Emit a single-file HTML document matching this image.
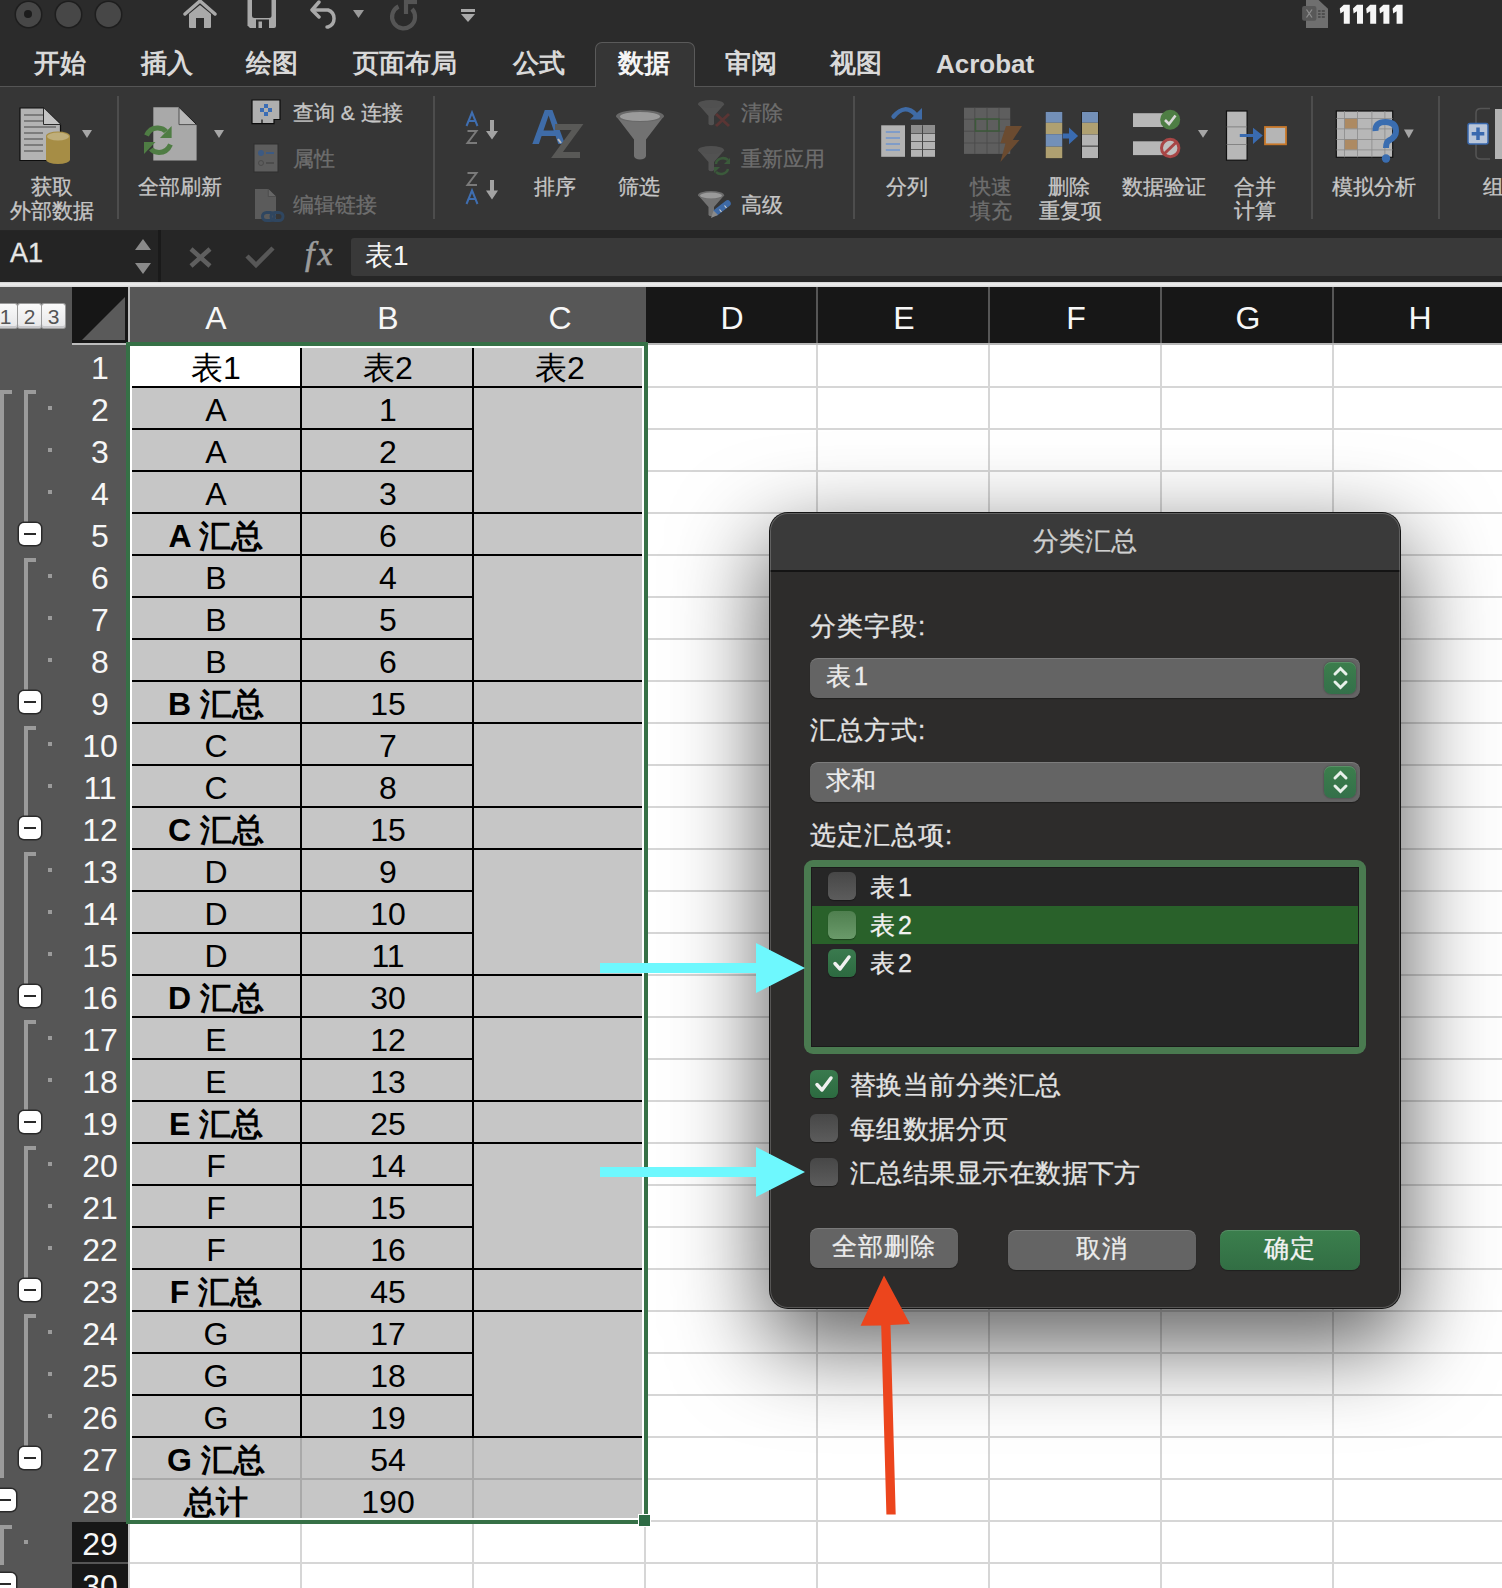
<!DOCTYPE html><html><head><meta charset="utf-8"><style>
html,body{margin:0;padding:0;background:#2b2b2b}
#root{position:relative;width:1502px;height:1588px;overflow:hidden;font-family:"Liberation Sans",sans-serif}
.t{position:absolute;white-space:nowrap}
.r{position:absolute}
</style></head><body><div id="root">
<div class="r" style="left:0px;top:0px;width:1502px;height:86px;background:#2b2b2b"></div>
<div class="r" style="left:15.5px;top:1.5px;width:25px;height:25px;border-radius:50%;background:#474747;box-shadow:0 0 0 1.5px #1e1e1e"></div>
<div class="r" style="left:55.5px;top:1.5px;width:25px;height:25px;border-radius:50%;background:#474747;box-shadow:0 0 0 1.5px #1e1e1e"></div>
<div class="r" style="left:95.5px;top:1.5px;width:25px;height:25px;border-radius:50%;background:#474747;box-shadow:0 0 0 1.5px #1e1e1e"></div>
<div class="r" style="left:24px;top:9.5px;width:8px;height:8px;border-radius:50%;background:#1c1c1c"></div>
<svg class="r" style="left:183px;top:0px" width="34" height="30" viewBox="0 0 34 30"><path d="M2 14 L17 1 L32 14" stroke="#a9a9a9" stroke-width="3.5" fill="none" stroke-linecap="round"/><path d="M6 14 L17 5 L28 14 V27 a1 1 0 0 1 -1 1 H21 V18 H13 V28 H7 a1 1 0 0 1 -1 -1Z" fill="#a9a9a9"/></svg>
<svg class="r" style="left:247px;top:0px" width="30" height="30" viewBox="0 0 30 30"><path d="M0.5 0 H29 V26 a2 2 0 0 1 -2 2 H3 L0.5 25.5 Z" fill="#a9a9a9"/><path d="M5 0 H24.5 V15.5 a2.5 2.5 0 0 1 -2.5 2.5 H7.5 a2.5 2.5 0 0 1 -2.5 -2.5 Z" fill="#2b2b2b"/><rect x="9" y="19.5" width="13" height="8.5" fill="#2b2b2b"/><rect x="11.5" y="21.5" width="3.5" height="6.5" fill="#a9a9a9"/></svg>
<svg class="r" style="left:309px;top:0px" width="34" height="30" viewBox="0 0 34 30"><path d="M10 2 L3 10 L10 17" stroke="#a9a9a9" stroke-width="3.5" fill="none" stroke-linecap="round" stroke-linejoin="round"/><path d="M4 10 H19 a9 9 0 0 1 0 17 H18" stroke="#a9a9a9" stroke-width="3.5" fill="none" stroke-linecap="round"/></svg>
<svg class="r" style="left:353px;top:10px" width="12" height="9" viewBox="0 0 12 9"><path d="M0 0 H11 L5.5 8Z" fill="#9a9a9a"/></svg>
<svg class="r" style="left:386px;top:0px" width="36" height="32" viewBox="0 0 36 32"><path d="M12.5 6.5 A11.5 11.5 0 1 0 26 9" stroke="#555" stroke-width="4.2" fill="none"/><path d="M20 0 V14" stroke="#555" stroke-width="4.2"/><path d="M18 2 H31" stroke="#555" stroke-width="4.2"/></svg>
<svg class="r" style="left:460px;top:8px" width="16" height="16" viewBox="0 0 16 16"><rect x="1" y="1" width="14" height="3" fill="#a9a9a9"/><path d="M1 6 H15 L8 14Z" fill="#a9a9a9"/></svg>
<svg class="r" style="left:1290px;top:0px" width="130" height="40" viewBox="0 0 130 40"><path d="M16 0 H28.6 L38 8.7 V27.9 H16 Z" fill="#6f6f6f"/><rect x="12.1" y="6" width="14.3" height="14.8" rx="2" fill="#585858"/><path d="M16.5 9.5 L22 17.5 M22 9.5 L16.5 17.5" stroke="#8c8c8c" stroke-width="1.3"/><g fill="#4e4e4e"><rect x="28.1" y="10" width="2.5" height="2"/><rect x="31.8" y="10" width="3" height="2"/><rect x="28.1" y="13" width="2.5" height="2"/><rect x="31.8" y="13" width="3" height="2"/><rect x="28.1" y="16" width="2.5" height="2"/><rect x="31.8" y="16" width="3" height="2"/></g><path transform="translate(49.78,0)" d="M4 4.8 H10 V23.8 H4 V11.3 L0.6 13.6 L0 8.6 Z" fill="#f6f6f6"/><path transform="translate(62.99,0)" d="M4 4.8 H10 V23.8 H4 V11.3 L0.6 13.6 L0 8.6 Z" fill="#f6f6f6"/><path transform="translate(76.19,0)" d="M4 4.8 H10 V23.8 H4 V11.3 L0.6 13.6 L0 8.6 Z" fill="#f6f6f6"/><path transform="translate(89.39,0)" d="M4 4.8 H10 V23.8 H4 V11.3 L0.6 13.6 L0 8.6 Z" fill="#f6f6f6"/><path transform="translate(102.60,0)" d="M4 4.8 H10 V23.8 H4 V11.3 L0.6 13.6 L0 8.6 Z" fill="#f6f6f6"/></svg>
<div class="r" style="left:595px;top:42px;width:100px;height:45px;background:#363636;border:1px solid #5a5a5a;border-bottom:none;border-radius:7px 7px 0 0;box-sizing:border-box"></div>
<div class="r" style="left:0px;top:86px;width:595px;height:1px;background:#555"></div>
<div class="r" style="left:695px;top:86px;width:807px;height:1px;background:#555"></div>
<div class="t" style="left:34px;top:51.4px;font-size:25.5px;line-height:25.5px;color:#d9d9d9;font-weight:bold;">开始</div>
<div class="t" style="left:141px;top:51.4px;font-size:25.5px;line-height:25.5px;color:#d9d9d9;font-weight:bold;">插入</div>
<div class="t" style="left:246px;top:51.4px;font-size:25.5px;line-height:25.5px;color:#d9d9d9;font-weight:bold;">绘图</div>
<div class="t" style="left:353px;top:51.4px;font-size:25.5px;line-height:25.5px;color:#d9d9d9;font-weight:bold;">页面布局</div>
<div class="t" style="left:513px;top:51.4px;font-size:25.5px;line-height:25.5px;color:#d9d9d9;font-weight:bold;">公式</div>
<div class="t" style="left:725px;top:51.4px;font-size:25.5px;line-height:25.5px;color:#d9d9d9;font-weight:bold;">审阅</div>
<div class="t" style="left:830px;top:51.4px;font-size:25.5px;line-height:25.5px;color:#d9d9d9;font-weight:bold;">视图</div>
<div class="t" style="left:618px;top:51.4px;font-size:25.5px;line-height:25.5px;color:#f4f4f4;font-weight:bold;">数据</div>
<div class="t" style="left:936px;top:51.0px;font-size:26px;line-height:26px;color:#d9d9d9;font-weight:bold;">Acrobat</div>
<div class="r" style="left:0px;top:87px;width:1502px;height:143px;background:#363636"></div>
<div class="r" style="left:117px;top:96px;width:2px;height:123px;background:#4d4d4d"></div>
<div class="r" style="left:433px;top:96px;width:2px;height:123px;background:#4d4d4d"></div>
<div class="r" style="left:853px;top:96px;width:2px;height:123px;background:#4d4d4d"></div>
<div class="r" style="left:1311px;top:96px;width:2px;height:123px;background:#4d4d4d"></div>
<div class="r" style="left:1438px;top:96px;width:2px;height:123px;background:#4d4d4d"></div>
<div class="t" style="left:-8.0px;width:120px;text-align:center;top:176.2px;font-size:21px;line-height:21px;color:#c6c6c6;font-weight:normal;-webkit-text-stroke:0.3px #c6c6c6;">获取</div>
<div class="t" style="left:-8.0px;width:120px;text-align:center;top:200.2px;font-size:21px;line-height:21px;color:#c6c6c6;font-weight:normal;-webkit-text-stroke:0.3px #c6c6c6;">外部数据</div>
<div class="t" style="left:120.0px;width:120px;text-align:center;top:176.2px;font-size:21px;line-height:21px;color:#c6c6c6;font-weight:normal;-webkit-text-stroke:0.3px #c6c6c6;">全部刷新</div>
<div class="t" style="left:293px;top:102.2px;font-size:21px;line-height:21px;color:#c6c6c6;font-weight:normal;-webkit-text-stroke:0.3px #c6c6c6;">查询 &amp; 连接</div>
<div class="t" style="left:293px;top:148.2px;font-size:21px;line-height:21px;color:#6e6e6e;font-weight:normal;-webkit-text-stroke:0.3px #6e6e6e;">属性</div>
<div class="t" style="left:293px;top:194.2px;font-size:21px;line-height:21px;color:#6e6e6e;font-weight:normal;-webkit-text-stroke:0.3px #6e6e6e;">编辑链接</div>
<div class="t" style="left:495.0px;width:120px;text-align:center;top:176.2px;font-size:21px;line-height:21px;color:#c6c6c6;font-weight:normal;-webkit-text-stroke:0.3px #c6c6c6;">排序</div>
<div class="t" style="left:579.0px;width:120px;text-align:center;top:176.2px;font-size:21px;line-height:21px;color:#c6c6c6;font-weight:normal;-webkit-text-stroke:0.3px #c6c6c6;">筛选</div>
<div class="t" style="left:741px;top:102.2px;font-size:21px;line-height:21px;color:#6e6e6e;font-weight:normal;-webkit-text-stroke:0.3px #6e6e6e;">清除</div>
<div class="t" style="left:741px;top:148.2px;font-size:21px;line-height:21px;color:#6e6e6e;font-weight:normal;-webkit-text-stroke:0.3px #6e6e6e;">重新应用</div>
<div class="t" style="left:741px;top:194.2px;font-size:21px;line-height:21px;color:#c6c6c6;font-weight:normal;-webkit-text-stroke:0.3px #c6c6c6;">高级</div>
<div class="t" style="left:847.0px;width:120px;text-align:center;top:176.2px;font-size:21px;line-height:21px;color:#c6c6c6;font-weight:normal;-webkit-text-stroke:0.3px #c6c6c6;">分列</div>
<div class="t" style="left:931.0px;width:120px;text-align:center;top:176.2px;font-size:21px;line-height:21px;color:#6e6e6e;font-weight:normal;-webkit-text-stroke:0.3px #6e6e6e;">快速</div>
<div class="t" style="left:931.0px;width:120px;text-align:center;top:200.2px;font-size:21px;line-height:21px;color:#6e6e6e;font-weight:normal;-webkit-text-stroke:0.3px #6e6e6e;">填充</div>
<div class="t" style="left:1009.0px;width:120px;text-align:center;top:176.2px;font-size:21px;line-height:21px;color:#c6c6c6;font-weight:normal;-webkit-text-stroke:0.3px #c6c6c6;">删除</div>
<div class="t" style="left:1010.0px;width:120px;text-align:center;top:200.2px;font-size:21px;line-height:21px;color:#c6c6c6;font-weight:normal;-webkit-text-stroke:0.3px #c6c6c6;">重复项</div>
<div class="t" style="left:1104.0px;width:120px;text-align:center;top:176.2px;font-size:21px;line-height:21px;color:#c6c6c6;font-weight:normal;-webkit-text-stroke:0.3px #c6c6c6;">数据验证</div>
<div class="t" style="left:1195.0px;width:120px;text-align:center;top:176.2px;font-size:21px;line-height:21px;color:#c6c6c6;font-weight:normal;-webkit-text-stroke:0.3px #c6c6c6;">合并</div>
<div class="t" style="left:1195.0px;width:120px;text-align:center;top:200.2px;font-size:21px;line-height:21px;color:#c6c6c6;font-weight:normal;-webkit-text-stroke:0.3px #c6c6c6;">计算</div>
<div class="t" style="left:1314.0px;width:120px;text-align:center;top:176.2px;font-size:21px;line-height:21px;color:#c6c6c6;font-weight:normal;-webkit-text-stroke:0.3px #c6c6c6;">模拟分析</div>
<div class="t" style="left:1483px;top:176.2px;font-size:21px;line-height:21px;color:#c6c6c6;font-weight:normal;-webkit-text-stroke:0.3px #c6c6c6;">组</div>
<svg class="r" style="left:10px;top:100px" width="100" height="70" viewBox="0 0 100 70">
<path d="M10 8 H33.5 L50.5 24.5 V60.5 H10 Z" fill="#b3b3b3" stroke="#0e0e0e" stroke-width="1.2"/>
<path d="M33.5 8 V24.5 H50.5" fill="#c4c4c4" stroke="#2a2a2a" stroke-width="1"/>
<g fill="#7c7c7c"><rect x="14" y="14" width="19" height="2"/><rect x="14" y="20" width="19" height="2"/><rect x="14" y="26" width="32" height="2"/><rect x="14" y="32" width="19" height="2"/><rect x="14" y="38" width="19" height="2"/><rect x="14" y="44" width="19" height="2"/><rect x="14" y="50" width="19" height="2"/></g>
<path d="M36 36 A12 4.5 0 0 1 60 36 V59.5 A12 4.5 0 0 1 36 59.5 Z" fill="#a68d45"/>
<ellipse cx="48" cy="36.5" rx="11" ry="4" fill="#bfae7a"/>
<path d="M72 30 H82 L77 38 Z" fill="#a6a6a6"/>
</svg>
<svg class="r" style="left:135px;top:100px" width="100" height="70" viewBox="0 0 100 70">
<path d="M18.3 7.3 H44 L61.6 24.6 V60.6 H18.3 Z" fill="#a9a9a9"/>
<path d="M44 7.3 V24.6 H61.6" fill="#b8b8b8" stroke="#3a3a3a" stroke-width="0.8"/>
<path d="M44 7.3 L61.6 24.6" stroke="#1a1a1a" stroke-width="1"/>
<path d="M11.5 35.5 Q15 27.5 23 28 Q28.5 28.3 31 31.5" stroke="#4f7d44" stroke-width="5" fill="none"/>
<path d="M36.6 26 V38 H25 Z" fill="#4f7d44"/>
<path d="M35.5 44.5 Q32 52.5 24 52.5 Q18.5 52.3 16 49" stroke="#4f7d44" stroke-width="5" fill="none"/>
<path d="M9 42 H20.5 L9 54 Z" fill="#4f7d44"/>
<path d="M79 30 H89 L84 38 Z" fill="#a6a6a6"/>
</svg>
<svg class="r" style="left:245px;top:95px" width="50" height="130" viewBox="0 0 50 130">
<path d="M7 5 H35 V24.5 H29 V28.6 H17 V24.5 H17 V28.6 H7 Z" fill="#afafaf" stroke="#0c0c0c" stroke-width="1.2"/>
<g fill="#3b6db5"><rect x="19" y="9" width="4" height="4"/><rect x="15" y="13" width="4" height="4"/><rect x="23" y="13" width="4" height="4"/><rect x="19" y="17" width="4" height="4"/></g>
<rect x="9" y="49" width="24" height="28" fill="#5d5d5d" stroke="#2e2e2e" stroke-width="1"/>
<circle cx="16" cy="58" r="3" fill="#3d5a82"/><rect x="21" y="57" width="8" height="2" fill="#3d5a82"/>
<circle cx="16" cy="68" r="2.5" fill="none" stroke="#4a4a4a" stroke-width="1"/><rect x="21" y="67" width="8" height="2" fill="#4c4c4c"/>
<path d="M10 94 H23.3 L31 101.5 V124 H10 Z" fill="#5b5b5b"/>
<path d="M23.3 94 V101.5 H31" fill="#666" stroke="#4a4a4a" stroke-width="0.8"/>
<g stroke="#2f4660" stroke-width="3" fill="none"><rect x="17.5" y="117.5" width="12" height="8" rx="4"/><rect x="26" y="117.5" width="12" height="8" rx="4"/></g>
</svg>
<svg class="r" style="left:455px;top:100px" width="135" height="110" viewBox="0 0 135 110">
<path d="M11.5 26 L17 12.5 L22.5 26 M13.6 21 H20.4" stroke="#3f6eb0" stroke-width="2" fill="none"/>
<path d="M12.5 31 H21.5 L12.5 43 H22" stroke="#7a7a7a" stroke-width="2" fill="none"/>
<path d="M35 20 H39 V31 H43 L37 39.5 L31 31 H35 Z" fill="#a3a3a3"/>
<path d="M12.5 73 H21.5 L12.5 85 H22" stroke="#7a7a7a" stroke-width="2" fill="none"/>
<path d="M11.5 104 L17 90.5 L22.5 104 M13.6 99 H20.4" stroke="#3f6eb0" stroke-width="2" fill="none"/>
<path d="M35 80 H39 V90.5 H43 L37 99.5 L31 90.5 H35 Z" fill="#a3a3a3"/>
<path d="M77.3 44 L89.8 10 H97.4 L109.9 44 H103.3 L100.6 36 H86.6 L83.9 44 Z M88.5 30.5 H98.7 L93.6 15.5 Z" fill="#3f6ca8" fill-rule="evenodd"/>
<path d="M100 27 H122.5 L102 55 H125" stroke="#595957" stroke-width="6" fill="none"/>
<path d="M103 39 L106 43" stroke="#b8b8b8" stroke-width="2"/>
</svg>
<svg class="r" style="left:605px;top:92px" width="135" height="135" viewBox="0 0 135 135">
<path d="M11 24 L29 47.6 V64 A6 3.5 0 0 0 41 64 V47.6 L59 24 Z" fill="#727272"/>
<ellipse cx="35" cy="24" rx="24" ry="6" fill="#686868"/>
<ellipse cx="35" cy="24.5" rx="20" ry="4.5" fill="#9b9b9b"/>
<g opacity="0.55">
<path d="M93 12 L103.5 24 V32 A3 2 0 0 0 109 32 V24 L119.5 12 Z" fill="#6a6a6a"/>
<ellipse cx="106" cy="12" rx="13" ry="4" fill="#666"/>
<path d="M93 58 L103.5 70 V78 A3 2 0 0 0 109 78 V70 L119.5 58 Z" fill="#6a6a6a"/>
<ellipse cx="106" cy="58" rx="13" ry="4" fill="#666"/>
</g>
<path d="M111 22 L124 34 M124 22 L111 34" stroke="#5a3534" stroke-width="3"/>
<path d="M111 72 A7 6 0 0 1 123 68" stroke="#3b5a3b" stroke-width="2.5" fill="none"/><path d="M125 66 V72 H119Z" fill="#3b5a3b"/>
<path d="M123 77 A7 6 0 0 1 111 80" stroke="#3b5a3b" stroke-width="2.5" fill="none"/><path d="M109 75 H115 L109 81Z" fill="#3b5a3b"/>
<path d="M93 103 L103.5 115 V123 A3 2 0 0 0 109 123 V115 L119.5 103 Z" fill="#727272"/>
<ellipse cx="106" cy="103" rx="13" ry="4" fill="#6c6c6c"/>
<ellipse cx="106" cy="103.5" rx="11" ry="3" fill="#9a9a9a"/>
<path d="M111.5 120 L122.5 111.5" stroke="#3e6aa6" stroke-width="6.5" stroke-linecap="round"/>
<path d="M114.5 117.5 L116.5 120 M119.5 113.5 L121.5 116" stroke="#d0d0d0" stroke-width="1.2"/>
<path d="M106 126 L108.5 118.5 L113 123 Z" fill="#8a8a8a"/>
</svg>
<svg class="r" style="left:875px;top:100px" width="155" height="70" viewBox="0 0 155 70">
<rect x="6.2" y="25.3" width="23.8" height="31.5" fill="#b3b3b3"/>
<g fill="#7f9cc8"><rect x="10.8" y="31" width="14.2" height="2"/><rect x="10.8" y="37" width="14.2" height="2"/><rect x="10.8" y="43" width="14.2" height="2"/><rect x="10.8" y="49" width="14.2" height="2"/></g>
<rect x="36" y="25.3" width="24" height="31.5" fill="#b3b3b3"/>
<rect x="36" y="25.3" width="24" height="7.7" fill="#8d8d8d"/>
<g fill="#454545"><rect x="47" y="25.3" width="1" height="31.5"/><rect x="36" y="33" width="24" height="0.8"/><rect x="36" y="41" width="24" height="0.8"/><rect x="36" y="49" width="24" height="0.8"/></g>
<path d="M18.6 16.5 Q30 3 41 15" stroke="#3f6ba6" stroke-width="4.5" fill="none" stroke-linecap="round"/>
<path d="M47 8 V19.6 H35 Z" fill="#3f6ba6"/>
<rect x="89" y="7.7" width="46.2" height="46.2" fill="#5e5e5e"/>
<g fill="#4c4c4c"><rect x="99.3" y="7.7" width="1" height="46.2"/><rect x="111.5" y="7.7" width="1" height="46.2"/><rect x="123.5" y="7.7" width="1" height="46.2"/><rect x="89" y="18.7" width="46.2" height="1"/><rect x="89" y="30.7" width="46.2" height="1"/><rect x="89" y="42.5" width="46.2" height="1"/></g>
<rect x="100.5" y="19" width="23.5" height="12" fill="none" stroke="#3c5a3a" stroke-width="1.5"/><rect x="111.7" y="19" width="1" height="12" fill="#3c5a3a"/>
<path d="M131 26 H147 L137.8 40 H144.5 L125.4 62 L130.5 43.3 H125.4 Z" fill="#6b4b30"/>
</svg>
<svg class="r" style="left:1035px;top:100px" width="180" height="70" viewBox="0 0 180 70">
<rect x="10.2" y="11.4" width="17.6" height="47.3" fill="#2a2a2a"/>
<rect x="10.7" y="11.9" width="16.6" height="10.9" fill="#7390b8"/><rect x="10.7" y="22.8" width="16.6" height="11.4" fill="#afa071"/>
<rect x="10.7" y="34.2" width="16.6" height="12.5" fill="#7390b8"/><rect x="10.7" y="46.7" width="16.6" height="11.5" fill="#afa071"/>
<path d="M27.8 33.6 H34 V27.6 L43.1 36 L34 44.3 V38.4 H27.8 Z" fill="#3a6bb0"/>
<rect x="46.5" y="11.4" width="17" height="47.3" fill="#111"/>
<rect x="47" y="11.9" width="16" height="10.9" fill="#7390b8"/><rect x="47" y="22.8" width="16" height="11.7" fill="#afa071"/>
<rect x="47" y="34.5" width="16" height="11.2" fill="#b3b3b3"/><rect x="47" y="46.5" width="16" height="11.7" fill="#b3b3b3"/>
<rect x="98" y="13.2" width="30" height="13.8" fill="#b7b7b7"/>
<rect x="98" y="41.3" width="30" height="13.8" fill="#b7b7b7"/>
<circle cx="135.2" cy="19.8" r="10" fill="#4e7e44"/>
<path d="M130 20 L134 24 L140.5 15.5" stroke="#d8d8d8" stroke-width="2.6" fill="none"/>
<circle cx="135.2" cy="48" r="8.7" fill="#c0c0c0" stroke="#a84646" stroke-width="3"/>
<path d="M129.5 53.5 L141 42.5" stroke="#a84646" stroke-width="3"/>
<path d="M163 30 H173.2 L168 37.8 Z" fill="#a6a6a6"/>
</svg>
<svg class="r" style="left:1215px;top:100px" width="287" height="70" viewBox="0 0 287 70">
<rect x="11.5" y="11" width="20.6" height="49.2" fill="#b7b7b7" stroke="#111" stroke-width="1.2"/>
<rect x="11.5" y="26.5" width="20.6" height="0.8" fill="#777"/><rect x="11.5" y="44" width="20.6" height="0.8" fill="#777"/>
<path d="M24.8 34 H38 V27.7 L47.8 35.5 L38 44 V37 H24.8 Z" fill="#3a6bb0"/>
<rect x="50" y="27" width="21" height="17.3" fill="#b5b5b5" stroke="#c8782a" stroke-width="1.8"/>
<rect x="121.3" y="11" width="56.4" height="46.3" fill="#b7b7b7" stroke="#111" stroke-width="1.2"/>
<rect x="129.6" y="18.2" width="12.8" height="10.5" fill="#ad8a62"/><rect x="129.6" y="39.2" width="12.8" height="10.5" fill="#ad8a62"/>
<g fill="#8a8a8a"><rect x="129.2" y="11" width="0.8" height="46.3"/><rect x="142.2" y="11" width="0.8" height="46.3"/><rect x="156.5" y="11" width="0.8" height="46.3"/><rect x="169.5" y="11" width="0.8" height="46.3"/>
<rect x="121.3" y="18" width="56.4" height="0.8"/><rect x="121.3" y="28.5" width="56.4" height="0.8"/><rect x="121.3" y="39" width="56.4" height="0.8"/><rect x="121.3" y="49.5" width="56.4" height="0.8"/></g>
<path d="M160.5 31 Q160 22 170.5 22 Q181 22 181 31 Q181 37 174 40.5 Q171 42 171 48" stroke="#3a6db0" stroke-width="6" fill="none"/>
<circle cx="171" cy="58.5" r="4.2" fill="#3a6db0"/>
<path d="M189 29.6 H198.7 L193.8 38.2 Z" fill="#a6a6a6"/>
<path d="M275 8.5 H266 Q261 8.5 261 13 V55 Q261 59 266 59 H275" stroke="#555" stroke-width="1.5" fill="none"/>
<rect x="253" y="23.5" width="20" height="20.5" rx="2" fill="#b9c6da" stroke="#3a69ae" stroke-width="1.5"/>
<path d="M263 27.5 V40 M256.7 33.7 H269.3" stroke="#3a69ae" stroke-width="3.5"/>
<rect x="280" y="9" width="10" height="50" fill="#b3b3b3"/>
</svg>
<div class="r" style="left:0px;top:230px;width:1502px;height:52px;background:#262626"></div>
<div class="r" style="left:0px;top:231px;width:158px;height:49px;background:#242424"></div>
<div class="r" style="left:158px;top:230px;width:3px;height:52px;background:#1a1a1a"></div>
<div class="t" style="left:10px;top:240.1px;font-size:27px;line-height:27px;color:#e6e6e6;font-weight:normal;-webkit-text-stroke:0.3px #e6e6e6;">A1</div>
<svg class="r" style="left:134px;top:238px" width="18" height="38" viewBox="0 0 18 38"><path d="M1 12 L9 1 L17 12Z M1 25 L17 25 L9 36Z" fill="#8a8a8a"/></svg>
<svg class="r" style="left:188px;top:246px" width="25" height="23" viewBox="0 0 25 23"><path d="M3 3 L22 20 M22 3 L3 20" stroke="#5f5f5f" stroke-width="4.5"/></svg>
<svg class="r" style="left:244px;top:244px" width="32" height="25" viewBox="0 0 32 25"><path d="M3 12 L12 21 L29 4" stroke="#575757" stroke-width="4.5" fill="none"/></svg>
<div class="t" style="left:305px;top:237.2px;font-size:34px;line-height:34px;color:#9c9c9c;font-weight:normal;font-family:Liberation Serif,serif;-webkit-text-stroke:0.6px #9c9c9c;"><i>f</i><i style="margin-left:3px">x</i></div>
<div class="r" style="left:351px;top:238px;width:1151px;height:38px;background:#393939;border-radius:3px 0 0 3px"></div>
<div class="t" style="left:365px;top:242.3px;font-size:28px;line-height:28px;color:#f5f5f5;font-weight:normal;">表1</div>
<div class="r" style="left:0px;top:282px;width:1502px;height:5px;background:linear-gradient(#cfcfcf,#f0f0f0 40%,#d8d8d8)"></div>
<div class="r" style="left:0px;top:287px;width:1502px;height:1301px;background:#ffffff"></div>
<div class="r" style="left:0px;top:287px;width:72px;height:1301px;background:#565656"></div>
<div class="r" style="left:72px;top:345px;width:56px;height:1177px;background:#565656"></div>
<div class="r" style="left:-6px;top:304px;width:23px;height:24px;background:linear-gradient(#fafafa,#e6e6e8);border-radius:2px;box-shadow:inset 0 -2px 0 #c9c9cc, 0 0 0 1px #9a9a9a"></div>
<div class="t" style="left:-6.0px;width:23px;text-align:center;top:306.2px;font-size:21px;line-height:21px;color:#555;font-weight:normal;">1</div>
<div class="r" style="left:18px;top:304px;width:23px;height:24px;background:linear-gradient(#fafafa,#e6e6e8);border-radius:2px;box-shadow:inset 0 -2px 0 #c9c9cc, 0 0 0 1px #9a9a9a"></div>
<div class="t" style="left:18.0px;width:23px;text-align:center;top:306.2px;font-size:21px;line-height:21px;color:#555;font-weight:normal;">2</div>
<div class="r" style="left:42px;top:304px;width:23px;height:24px;background:linear-gradient(#fafafa,#e6e6e8);border-radius:2px;box-shadow:inset 0 -2px 0 #c9c9cc, 0 0 0 1px #9a9a9a"></div>
<div class="t" style="left:42.0px;width:23px;text-align:center;top:306.2px;font-size:21px;line-height:21px;color:#555;font-weight:normal;">3</div>
<div class="r" style="left:72px;top:287px;width:56px;height:56px;background:#161616"></div>
<svg class="r" style="left:72px;top:287px" width="58" height="58" viewBox="0 0 58 58"><path d="M10 53 L53 10 L53 53 Z" fill="#5a5a5a"/><rect x="56" y="0" width="2" height="58" fill="#bdbdbd"/><rect x="0" y="56" width="58" height="2" fill="#bdbdbd"/></svg>
<div class="r" style="left:130px;top:287px;width:516px;height:56px;background:#575757"></div>
<div class="r" style="left:646px;top:287px;width:856px;height:56px;background:#171717"></div>
<div class="r" style="left:646px;top:343px;width:856px;height:2px;background:#b8b8b8"></div>
<div class="r" style="left:816px;top:287px;width:2px;height:56px;background:#565656"></div>
<div class="r" style="left:988px;top:287px;width:2px;height:56px;background:#565656"></div>
<div class="r" style="left:1160px;top:287px;width:2px;height:56px;background:#565656"></div>
<div class="r" style="left:1332px;top:287px;width:2px;height:56px;background:#565656"></div>
<div class="t" style="left:136.0px;width:160px;text-align:center;top:301.9px;font-size:32px;line-height:32px;color:#f7f7f7;font-weight:normal;">A</div>
<div class="t" style="left:308.0px;width:160px;text-align:center;top:301.9px;font-size:32px;line-height:32px;color:#f7f7f7;font-weight:normal;">B</div>
<div class="t" style="left:480.0px;width:160px;text-align:center;top:301.9px;font-size:32px;line-height:32px;color:#f7f7f7;font-weight:normal;">C</div>
<div class="t" style="left:652.0px;width:160px;text-align:center;top:301.9px;font-size:32px;line-height:32px;color:#f7f7f7;font-weight:normal;">D</div>
<div class="t" style="left:824.0px;width:160px;text-align:center;top:301.9px;font-size:32px;line-height:32px;color:#f7f7f7;font-weight:normal;">E</div>
<div class="t" style="left:996.0px;width:160px;text-align:center;top:301.9px;font-size:32px;line-height:32px;color:#f7f7f7;font-weight:normal;">F</div>
<div class="t" style="left:1168.0px;width:160px;text-align:center;top:301.9px;font-size:32px;line-height:32px;color:#f7f7f7;font-weight:normal;">G</div>
<div class="t" style="left:1340.0px;width:160px;text-align:center;top:301.9px;font-size:32px;line-height:32px;color:#f7f7f7;font-weight:normal;">H</div>
<div class="r" style="left:646px;top:386px;width:856px;height:2px;background:#d6d6d6"></div>
<div class="r" style="left:646px;top:428px;width:856px;height:2px;background:#d6d6d6"></div>
<div class="r" style="left:646px;top:470px;width:856px;height:2px;background:#d6d6d6"></div>
<div class="r" style="left:646px;top:512px;width:856px;height:2px;background:#d6d6d6"></div>
<div class="r" style="left:646px;top:554px;width:856px;height:2px;background:#d6d6d6"></div>
<div class="r" style="left:646px;top:596px;width:856px;height:2px;background:#d6d6d6"></div>
<div class="r" style="left:646px;top:638px;width:856px;height:2px;background:#d6d6d6"></div>
<div class="r" style="left:646px;top:680px;width:856px;height:2px;background:#d6d6d6"></div>
<div class="r" style="left:646px;top:722px;width:856px;height:2px;background:#d6d6d6"></div>
<div class="r" style="left:646px;top:764px;width:856px;height:2px;background:#d6d6d6"></div>
<div class="r" style="left:646px;top:806px;width:856px;height:2px;background:#d6d6d6"></div>
<div class="r" style="left:646px;top:848px;width:856px;height:2px;background:#d6d6d6"></div>
<div class="r" style="left:646px;top:890px;width:856px;height:2px;background:#d6d6d6"></div>
<div class="r" style="left:646px;top:932px;width:856px;height:2px;background:#d6d6d6"></div>
<div class="r" style="left:646px;top:974px;width:856px;height:2px;background:#d6d6d6"></div>
<div class="r" style="left:646px;top:1016px;width:856px;height:2px;background:#d6d6d6"></div>
<div class="r" style="left:646px;top:1058px;width:856px;height:2px;background:#d6d6d6"></div>
<div class="r" style="left:646px;top:1100px;width:856px;height:2px;background:#d6d6d6"></div>
<div class="r" style="left:646px;top:1142px;width:856px;height:2px;background:#d6d6d6"></div>
<div class="r" style="left:646px;top:1184px;width:856px;height:2px;background:#d6d6d6"></div>
<div class="r" style="left:646px;top:1226px;width:856px;height:2px;background:#d6d6d6"></div>
<div class="r" style="left:646px;top:1268px;width:856px;height:2px;background:#d6d6d6"></div>
<div class="r" style="left:646px;top:1310px;width:856px;height:2px;background:#d6d6d6"></div>
<div class="r" style="left:646px;top:1352px;width:856px;height:2px;background:#d6d6d6"></div>
<div class="r" style="left:646px;top:1394px;width:856px;height:2px;background:#d6d6d6"></div>
<div class="r" style="left:646px;top:1436px;width:856px;height:2px;background:#d6d6d6"></div>
<div class="r" style="left:646px;top:1478px;width:856px;height:2px;background:#d6d6d6"></div>
<div class="r" style="left:646px;top:1520px;width:856px;height:2px;background:#d6d6d6"></div>
<div class="r" style="left:646px;top:1562px;width:856px;height:2px;background:#d6d6d6"></div>
<div class="r" style="left:646px;top:1604px;width:856px;height:2px;background:#d6d6d6"></div>
<div class="r" style="left:816px;top:345px;width:2px;height:1243px;background:#d6d6d6"></div>
<div class="r" style="left:988px;top:345px;width:2px;height:1243px;background:#d6d6d6"></div>
<div class="r" style="left:1160px;top:345px;width:2px;height:1243px;background:#d6d6d6"></div>
<div class="r" style="left:1332px;top:345px;width:2px;height:1243px;background:#d6d6d6"></div>
<div class="r" style="left:130px;top:1562px;width:516px;height:2px;background:#d6d6d6"></div>
<div class="r" style="left:130px;top:1604px;width:516px;height:2px;background:#d6d6d6"></div>
<div class="r" style="left:300px;top:1524px;width:2px;height:64px;background:#d6d6d6"></div>
<div class="r" style="left:472px;top:1524px;width:2px;height:64px;background:#d6d6d6"></div>
<div class="r" style="left:644px;top:1524px;width:2px;height:64px;background:#d6d6d6"></div>
<div class="r" style="left:128px;top:1522px;width:2px;height:66px;background:#c8c8c8"></div>
<div class="r" style="left:72px;top:1522px;width:56px;height:40px;background:#171717"></div>
<div class="r" style="left:72px;top:1562px;width:56px;height:2px;background:#555"></div>
<div class="r" style="left:72px;top:1564px;width:56px;height:30px;background:#171717"></div>
<div class="t" style="left:70.0px;width:60px;text-align:center;top:351.9px;font-size:32px;line-height:32px;color:#f7f7f7;font-weight:normal;">1</div>
<div class="t" style="left:70.0px;width:60px;text-align:center;top:393.9px;font-size:32px;line-height:32px;color:#f7f7f7;font-weight:normal;">2</div>
<div class="t" style="left:70.0px;width:60px;text-align:center;top:435.9px;font-size:32px;line-height:32px;color:#f7f7f7;font-weight:normal;">3</div>
<div class="t" style="left:70.0px;width:60px;text-align:center;top:477.9px;font-size:32px;line-height:32px;color:#f7f7f7;font-weight:normal;">4</div>
<div class="t" style="left:70.0px;width:60px;text-align:center;top:519.9px;font-size:32px;line-height:32px;color:#f7f7f7;font-weight:normal;">5</div>
<div class="t" style="left:70.0px;width:60px;text-align:center;top:561.9px;font-size:32px;line-height:32px;color:#f7f7f7;font-weight:normal;">6</div>
<div class="t" style="left:70.0px;width:60px;text-align:center;top:603.9px;font-size:32px;line-height:32px;color:#f7f7f7;font-weight:normal;">7</div>
<div class="t" style="left:70.0px;width:60px;text-align:center;top:645.9px;font-size:32px;line-height:32px;color:#f7f7f7;font-weight:normal;">8</div>
<div class="t" style="left:70.0px;width:60px;text-align:center;top:687.9px;font-size:32px;line-height:32px;color:#f7f7f7;font-weight:normal;">9</div>
<div class="t" style="left:70.0px;width:60px;text-align:center;top:729.9px;font-size:32px;line-height:32px;color:#f7f7f7;font-weight:normal;">10</div>
<div class="t" style="left:70.0px;width:60px;text-align:center;top:771.9px;font-size:32px;line-height:32px;color:#f7f7f7;font-weight:normal;">11</div>
<div class="t" style="left:70.0px;width:60px;text-align:center;top:813.9px;font-size:32px;line-height:32px;color:#f7f7f7;font-weight:normal;">12</div>
<div class="t" style="left:70.0px;width:60px;text-align:center;top:855.9px;font-size:32px;line-height:32px;color:#f7f7f7;font-weight:normal;">13</div>
<div class="t" style="left:70.0px;width:60px;text-align:center;top:897.9px;font-size:32px;line-height:32px;color:#f7f7f7;font-weight:normal;">14</div>
<div class="t" style="left:70.0px;width:60px;text-align:center;top:939.9px;font-size:32px;line-height:32px;color:#f7f7f7;font-weight:normal;">15</div>
<div class="t" style="left:70.0px;width:60px;text-align:center;top:981.9px;font-size:32px;line-height:32px;color:#f7f7f7;font-weight:normal;">16</div>
<div class="t" style="left:70.0px;width:60px;text-align:center;top:1023.9px;font-size:32px;line-height:32px;color:#f7f7f7;font-weight:normal;">17</div>
<div class="t" style="left:70.0px;width:60px;text-align:center;top:1065.9px;font-size:32px;line-height:32px;color:#f7f7f7;font-weight:normal;">18</div>
<div class="t" style="left:70.0px;width:60px;text-align:center;top:1107.9px;font-size:32px;line-height:32px;color:#f7f7f7;font-weight:normal;">19</div>
<div class="t" style="left:70.0px;width:60px;text-align:center;top:1149.9px;font-size:32px;line-height:32px;color:#f7f7f7;font-weight:normal;">20</div>
<div class="t" style="left:70.0px;width:60px;text-align:center;top:1191.9px;font-size:32px;line-height:32px;color:#f7f7f7;font-weight:normal;">21</div>
<div class="t" style="left:70.0px;width:60px;text-align:center;top:1233.9px;font-size:32px;line-height:32px;color:#f7f7f7;font-weight:normal;">22</div>
<div class="t" style="left:70.0px;width:60px;text-align:center;top:1275.9px;font-size:32px;line-height:32px;color:#f7f7f7;font-weight:normal;">23</div>
<div class="t" style="left:70.0px;width:60px;text-align:center;top:1317.9px;font-size:32px;line-height:32px;color:#f7f7f7;font-weight:normal;">24</div>
<div class="t" style="left:70.0px;width:60px;text-align:center;top:1359.9px;font-size:32px;line-height:32px;color:#f7f7f7;font-weight:normal;">25</div>
<div class="t" style="left:70.0px;width:60px;text-align:center;top:1401.9px;font-size:32px;line-height:32px;color:#f7f7f7;font-weight:normal;">26</div>
<div class="t" style="left:70.0px;width:60px;text-align:center;top:1443.9px;font-size:32px;line-height:32px;color:#f7f7f7;font-weight:normal;">27</div>
<div class="t" style="left:70.0px;width:60px;text-align:center;top:1485.9px;font-size:32px;line-height:32px;color:#f7f7f7;font-weight:normal;">28</div>
<div class="t" style="left:70.0px;width:60px;text-align:center;top:1527.9px;font-size:32px;line-height:32px;color:#f7f7f7;font-weight:normal;">29</div>
<div class="t" style="left:70.0px;width:60px;text-align:center;top:1569.9px;font-size:32px;line-height:32px;color:#f7f7f7;font-weight:normal;">30</div>
<div class="r" style="left:126px;top:342px;width:522px;height:1182px;background:#367046"></div>
<div class="r" style="left:130px;top:346px;width:514px;height:1174px;background:#ffffff"></div>
<div class="r" style="left:132px;top:348px;width:510px;height:1170px;background:#c6c6c6"></div>
<div class="r" style="left:130px;top:346px;width:170px;height:40px;background:#ffffff"></div>
<div class="r" style="left:639px;top:1515px;width:11px;height:11px;background:#2e6b45;box-shadow:0 0 0 1px #fff"></div>
<div class="r" style="left:132px;top:386px;width:340px;height:2px;background:#000"></div>
<div class="r" style="left:132px;top:428px;width:340px;height:2px;background:#000"></div>
<div class="r" style="left:132px;top:470px;width:340px;height:2px;background:#000"></div>
<div class="r" style="left:132px;top:512px;width:340px;height:2px;background:#000"></div>
<div class="r" style="left:132px;top:554px;width:340px;height:2px;background:#000"></div>
<div class="r" style="left:132px;top:596px;width:340px;height:2px;background:#000"></div>
<div class="r" style="left:132px;top:638px;width:340px;height:2px;background:#000"></div>
<div class="r" style="left:132px;top:680px;width:340px;height:2px;background:#000"></div>
<div class="r" style="left:132px;top:722px;width:340px;height:2px;background:#000"></div>
<div class="r" style="left:132px;top:764px;width:340px;height:2px;background:#000"></div>
<div class="r" style="left:132px;top:806px;width:340px;height:2px;background:#000"></div>
<div class="r" style="left:132px;top:848px;width:340px;height:2px;background:#000"></div>
<div class="r" style="left:132px;top:890px;width:340px;height:2px;background:#000"></div>
<div class="r" style="left:132px;top:932px;width:340px;height:2px;background:#000"></div>
<div class="r" style="left:132px;top:974px;width:340px;height:2px;background:#000"></div>
<div class="r" style="left:132px;top:1016px;width:340px;height:2px;background:#000"></div>
<div class="r" style="left:132px;top:1058px;width:340px;height:2px;background:#000"></div>
<div class="r" style="left:132px;top:1100px;width:340px;height:2px;background:#000"></div>
<div class="r" style="left:132px;top:1142px;width:340px;height:2px;background:#000"></div>
<div class="r" style="left:132px;top:1184px;width:340px;height:2px;background:#000"></div>
<div class="r" style="left:132px;top:1226px;width:340px;height:2px;background:#000"></div>
<div class="r" style="left:132px;top:1268px;width:340px;height:2px;background:#000"></div>
<div class="r" style="left:132px;top:1310px;width:340px;height:2px;background:#000"></div>
<div class="r" style="left:132px;top:1352px;width:340px;height:2px;background:#000"></div>
<div class="r" style="left:132px;top:1394px;width:340px;height:2px;background:#000"></div>
<div class="r" style="left:132px;top:1436px;width:340px;height:2px;background:#000"></div>
<div class="r" style="left:472px;top:386px;width:170px;height:2px;background:#000"></div>
<div class="r" style="left:472px;top:512px;width:170px;height:2px;background:#000"></div>
<div class="r" style="left:472px;top:554px;width:170px;height:2px;background:#000"></div>
<div class="r" style="left:472px;top:680px;width:170px;height:2px;background:#000"></div>
<div class="r" style="left:472px;top:722px;width:170px;height:2px;background:#000"></div>
<div class="r" style="left:472px;top:806px;width:170px;height:2px;background:#000"></div>
<div class="r" style="left:472px;top:848px;width:170px;height:2px;background:#000"></div>
<div class="r" style="left:472px;top:974px;width:170px;height:2px;background:#000"></div>
<div class="r" style="left:472px;top:1016px;width:170px;height:2px;background:#000"></div>
<div class="r" style="left:472px;top:1100px;width:170px;height:2px;background:#000"></div>
<div class="r" style="left:472px;top:1142px;width:170px;height:2px;background:#000"></div>
<div class="r" style="left:472px;top:1268px;width:170px;height:2px;background:#000"></div>
<div class="r" style="left:472px;top:1310px;width:170px;height:2px;background:#000"></div>
<div class="r" style="left:472px;top:1436px;width:170px;height:2px;background:#000"></div>
<div class="r" style="left:300px;top:348px;width:2px;height:1090px;background:#000"></div>
<div class="r" style="left:472px;top:348px;width:2px;height:1090px;background:#000"></div>
<div class="r" style="left:132px;top:1478px;width:510px;height:2px;background:#a9a9a9"></div>
<div class="r" style="left:300px;top:1438px;width:2px;height:80px;background:#a9a9a9"></div>
<div class="r" style="left:472px;top:1438px;width:2px;height:80px;background:#a9a9a9"></div>
<div class="t" style="left:132.0px;width:168px;text-align:center;top:351.9px;font-size:32px;line-height:32px;color:#000;font-weight:normal;">表1</div>
<div class="t" style="left:304.0px;width:168px;text-align:center;top:351.9px;font-size:32px;line-height:32px;color:#000;font-weight:normal;">表2</div>
<div class="t" style="left:476.0px;width:168px;text-align:center;top:351.9px;font-size:32px;line-height:32px;color:#000;font-weight:normal;">表2</div>
<div class="t" style="left:132.0px;width:168px;text-align:center;top:393.9px;font-size:32px;line-height:32px;color:#000;font-weight:normal;">A</div>
<div class="t" style="left:304.0px;width:168px;text-align:center;top:393.9px;font-size:32px;line-height:32px;color:#000;font-weight:normal;">1</div>
<div class="t" style="left:132.0px;width:168px;text-align:center;top:435.9px;font-size:32px;line-height:32px;color:#000;font-weight:normal;">A</div>
<div class="t" style="left:304.0px;width:168px;text-align:center;top:435.9px;font-size:32px;line-height:32px;color:#000;font-weight:normal;">2</div>
<div class="t" style="left:132.0px;width:168px;text-align:center;top:477.9px;font-size:32px;line-height:32px;color:#000;font-weight:normal;">A</div>
<div class="t" style="left:304.0px;width:168px;text-align:center;top:477.9px;font-size:32px;line-height:32px;color:#000;font-weight:normal;">3</div>
<div class="t" style="left:132.0px;width:168px;text-align:center;top:519.9px;font-size:32px;line-height:32px;color:#000;font-weight:bold;">A 汇总</div>
<div class="t" style="left:304.0px;width:168px;text-align:center;top:519.9px;font-size:32px;line-height:32px;color:#000;font-weight:normal;">6</div>
<div class="t" style="left:132.0px;width:168px;text-align:center;top:561.9px;font-size:32px;line-height:32px;color:#000;font-weight:normal;">B</div>
<div class="t" style="left:304.0px;width:168px;text-align:center;top:561.9px;font-size:32px;line-height:32px;color:#000;font-weight:normal;">4</div>
<div class="t" style="left:132.0px;width:168px;text-align:center;top:603.9px;font-size:32px;line-height:32px;color:#000;font-weight:normal;">B</div>
<div class="t" style="left:304.0px;width:168px;text-align:center;top:603.9px;font-size:32px;line-height:32px;color:#000;font-weight:normal;">5</div>
<div class="t" style="left:132.0px;width:168px;text-align:center;top:645.9px;font-size:32px;line-height:32px;color:#000;font-weight:normal;">B</div>
<div class="t" style="left:304.0px;width:168px;text-align:center;top:645.9px;font-size:32px;line-height:32px;color:#000;font-weight:normal;">6</div>
<div class="t" style="left:132.0px;width:168px;text-align:center;top:687.9px;font-size:32px;line-height:32px;color:#000;font-weight:bold;">B 汇总</div>
<div class="t" style="left:304.0px;width:168px;text-align:center;top:687.9px;font-size:32px;line-height:32px;color:#000;font-weight:normal;">15</div>
<div class="t" style="left:132.0px;width:168px;text-align:center;top:729.9px;font-size:32px;line-height:32px;color:#000;font-weight:normal;">C</div>
<div class="t" style="left:304.0px;width:168px;text-align:center;top:729.9px;font-size:32px;line-height:32px;color:#000;font-weight:normal;">7</div>
<div class="t" style="left:132.0px;width:168px;text-align:center;top:771.9px;font-size:32px;line-height:32px;color:#000;font-weight:normal;">C</div>
<div class="t" style="left:304.0px;width:168px;text-align:center;top:771.9px;font-size:32px;line-height:32px;color:#000;font-weight:normal;">8</div>
<div class="t" style="left:132.0px;width:168px;text-align:center;top:813.9px;font-size:32px;line-height:32px;color:#000;font-weight:bold;">C 汇总</div>
<div class="t" style="left:304.0px;width:168px;text-align:center;top:813.9px;font-size:32px;line-height:32px;color:#000;font-weight:normal;">15</div>
<div class="t" style="left:132.0px;width:168px;text-align:center;top:855.9px;font-size:32px;line-height:32px;color:#000;font-weight:normal;">D</div>
<div class="t" style="left:304.0px;width:168px;text-align:center;top:855.9px;font-size:32px;line-height:32px;color:#000;font-weight:normal;">9</div>
<div class="t" style="left:132.0px;width:168px;text-align:center;top:897.9px;font-size:32px;line-height:32px;color:#000;font-weight:normal;">D</div>
<div class="t" style="left:304.0px;width:168px;text-align:center;top:897.9px;font-size:32px;line-height:32px;color:#000;font-weight:normal;">10</div>
<div class="t" style="left:132.0px;width:168px;text-align:center;top:939.9px;font-size:32px;line-height:32px;color:#000;font-weight:normal;">D</div>
<div class="t" style="left:304.0px;width:168px;text-align:center;top:939.9px;font-size:32px;line-height:32px;color:#000;font-weight:normal;">11</div>
<div class="t" style="left:132.0px;width:168px;text-align:center;top:981.9px;font-size:32px;line-height:32px;color:#000;font-weight:bold;">D 汇总</div>
<div class="t" style="left:304.0px;width:168px;text-align:center;top:981.9px;font-size:32px;line-height:32px;color:#000;font-weight:normal;">30</div>
<div class="t" style="left:132.0px;width:168px;text-align:center;top:1023.9px;font-size:32px;line-height:32px;color:#000;font-weight:normal;">E</div>
<div class="t" style="left:304.0px;width:168px;text-align:center;top:1023.9px;font-size:32px;line-height:32px;color:#000;font-weight:normal;">12</div>
<div class="t" style="left:132.0px;width:168px;text-align:center;top:1065.9px;font-size:32px;line-height:32px;color:#000;font-weight:normal;">E</div>
<div class="t" style="left:304.0px;width:168px;text-align:center;top:1065.9px;font-size:32px;line-height:32px;color:#000;font-weight:normal;">13</div>
<div class="t" style="left:132.0px;width:168px;text-align:center;top:1107.9px;font-size:32px;line-height:32px;color:#000;font-weight:bold;">E 汇总</div>
<div class="t" style="left:304.0px;width:168px;text-align:center;top:1107.9px;font-size:32px;line-height:32px;color:#000;font-weight:normal;">25</div>
<div class="t" style="left:132.0px;width:168px;text-align:center;top:1149.9px;font-size:32px;line-height:32px;color:#000;font-weight:normal;">F</div>
<div class="t" style="left:304.0px;width:168px;text-align:center;top:1149.9px;font-size:32px;line-height:32px;color:#000;font-weight:normal;">14</div>
<div class="t" style="left:132.0px;width:168px;text-align:center;top:1191.9px;font-size:32px;line-height:32px;color:#000;font-weight:normal;">F</div>
<div class="t" style="left:304.0px;width:168px;text-align:center;top:1191.9px;font-size:32px;line-height:32px;color:#000;font-weight:normal;">15</div>
<div class="t" style="left:132.0px;width:168px;text-align:center;top:1233.9px;font-size:32px;line-height:32px;color:#000;font-weight:normal;">F</div>
<div class="t" style="left:304.0px;width:168px;text-align:center;top:1233.9px;font-size:32px;line-height:32px;color:#000;font-weight:normal;">16</div>
<div class="t" style="left:132.0px;width:168px;text-align:center;top:1275.9px;font-size:32px;line-height:32px;color:#000;font-weight:bold;">F 汇总</div>
<div class="t" style="left:304.0px;width:168px;text-align:center;top:1275.9px;font-size:32px;line-height:32px;color:#000;font-weight:normal;">45</div>
<div class="t" style="left:132.0px;width:168px;text-align:center;top:1317.9px;font-size:32px;line-height:32px;color:#000;font-weight:normal;">G</div>
<div class="t" style="left:304.0px;width:168px;text-align:center;top:1317.9px;font-size:32px;line-height:32px;color:#000;font-weight:normal;">17</div>
<div class="t" style="left:132.0px;width:168px;text-align:center;top:1359.9px;font-size:32px;line-height:32px;color:#000;font-weight:normal;">G</div>
<div class="t" style="left:304.0px;width:168px;text-align:center;top:1359.9px;font-size:32px;line-height:32px;color:#000;font-weight:normal;">18</div>
<div class="t" style="left:132.0px;width:168px;text-align:center;top:1401.9px;font-size:32px;line-height:32px;color:#000;font-weight:normal;">G</div>
<div class="t" style="left:304.0px;width:168px;text-align:center;top:1401.9px;font-size:32px;line-height:32px;color:#000;font-weight:normal;">19</div>
<div class="t" style="left:132.0px;width:168px;text-align:center;top:1443.9px;font-size:32px;line-height:32px;color:#000;font-weight:bold;">G 汇总</div>
<div class="t" style="left:304.0px;width:168px;text-align:center;top:1443.9px;font-size:32px;line-height:32px;color:#000;font-weight:normal;">54</div>
<div class="t" style="left:132.0px;width:168px;text-align:center;top:1485.9px;font-size:32px;line-height:32px;color:#000;font-weight:bold;">总计</div>
<div class="t" style="left:304.0px;width:168px;text-align:center;top:1485.9px;font-size:32px;line-height:32px;color:#000;font-weight:normal;">190</div>
<div class="r" style="left:24px;top:390px;width:4px;height:133px;background:#9b9b9b"></div>
<div class="r" style="left:24px;top:390px;width:12px;height:4px;background:#9b9b9b"></div>
<div class="r" style="left:48px;top:406px;width:4px;height:4px;background:#9b9b9b"></div>
<div class="r" style="left:48px;top:448px;width:4px;height:4px;background:#9b9b9b"></div>
<div class="r" style="left:48px;top:490px;width:4px;height:4px;background:#9b9b9b"></div>
<div class="r" style="left:19px;top:523px;width:22px;height:22px;background:#fff;border-radius:5px;box-shadow:0 0 0 1.5px #2a2a2a"></div>
<div class="r" style="left:24px;top:533px;width:12px;height:2px;background:#2a2a2a"></div>
<div class="r" style="left:24px;top:558px;width:4px;height:133px;background:#9b9b9b"></div>
<div class="r" style="left:24px;top:558px;width:12px;height:4px;background:#9b9b9b"></div>
<div class="r" style="left:48px;top:574px;width:4px;height:4px;background:#9b9b9b"></div>
<div class="r" style="left:48px;top:616px;width:4px;height:4px;background:#9b9b9b"></div>
<div class="r" style="left:48px;top:658px;width:4px;height:4px;background:#9b9b9b"></div>
<div class="r" style="left:19px;top:691px;width:22px;height:22px;background:#fff;border-radius:5px;box-shadow:0 0 0 1.5px #2a2a2a"></div>
<div class="r" style="left:24px;top:701px;width:12px;height:2px;background:#2a2a2a"></div>
<div class="r" style="left:24px;top:726px;width:4px;height:91px;background:#9b9b9b"></div>
<div class="r" style="left:24px;top:726px;width:12px;height:4px;background:#9b9b9b"></div>
<div class="r" style="left:48px;top:742px;width:4px;height:4px;background:#9b9b9b"></div>
<div class="r" style="left:48px;top:784px;width:4px;height:4px;background:#9b9b9b"></div>
<div class="r" style="left:19px;top:817px;width:22px;height:22px;background:#fff;border-radius:5px;box-shadow:0 0 0 1.5px #2a2a2a"></div>
<div class="r" style="left:24px;top:827px;width:12px;height:2px;background:#2a2a2a"></div>
<div class="r" style="left:24px;top:852px;width:4px;height:133px;background:#9b9b9b"></div>
<div class="r" style="left:24px;top:852px;width:12px;height:4px;background:#9b9b9b"></div>
<div class="r" style="left:48px;top:868px;width:4px;height:4px;background:#9b9b9b"></div>
<div class="r" style="left:48px;top:910px;width:4px;height:4px;background:#9b9b9b"></div>
<div class="r" style="left:48px;top:952px;width:4px;height:4px;background:#9b9b9b"></div>
<div class="r" style="left:19px;top:985px;width:22px;height:22px;background:#fff;border-radius:5px;box-shadow:0 0 0 1.5px #2a2a2a"></div>
<div class="r" style="left:24px;top:995px;width:12px;height:2px;background:#2a2a2a"></div>
<div class="r" style="left:24px;top:1020px;width:4px;height:91px;background:#9b9b9b"></div>
<div class="r" style="left:24px;top:1020px;width:12px;height:4px;background:#9b9b9b"></div>
<div class="r" style="left:48px;top:1036px;width:4px;height:4px;background:#9b9b9b"></div>
<div class="r" style="left:48px;top:1078px;width:4px;height:4px;background:#9b9b9b"></div>
<div class="r" style="left:19px;top:1111px;width:22px;height:22px;background:#fff;border-radius:5px;box-shadow:0 0 0 1.5px #2a2a2a"></div>
<div class="r" style="left:24px;top:1121px;width:12px;height:2px;background:#2a2a2a"></div>
<div class="r" style="left:24px;top:1146px;width:4px;height:133px;background:#9b9b9b"></div>
<div class="r" style="left:24px;top:1146px;width:12px;height:4px;background:#9b9b9b"></div>
<div class="r" style="left:48px;top:1162px;width:4px;height:4px;background:#9b9b9b"></div>
<div class="r" style="left:48px;top:1204px;width:4px;height:4px;background:#9b9b9b"></div>
<div class="r" style="left:48px;top:1246px;width:4px;height:4px;background:#9b9b9b"></div>
<div class="r" style="left:19px;top:1279px;width:22px;height:22px;background:#fff;border-radius:5px;box-shadow:0 0 0 1.5px #2a2a2a"></div>
<div class="r" style="left:24px;top:1289px;width:12px;height:2px;background:#2a2a2a"></div>
<div class="r" style="left:24px;top:1314px;width:4px;height:133px;background:#9b9b9b"></div>
<div class="r" style="left:24px;top:1314px;width:12px;height:4px;background:#9b9b9b"></div>
<div class="r" style="left:48px;top:1330px;width:4px;height:4px;background:#9b9b9b"></div>
<div class="r" style="left:48px;top:1372px;width:4px;height:4px;background:#9b9b9b"></div>
<div class="r" style="left:48px;top:1414px;width:4px;height:4px;background:#9b9b9b"></div>
<div class="r" style="left:19px;top:1447px;width:22px;height:22px;background:#fff;border-radius:5px;box-shadow:0 0 0 1.5px #2a2a2a"></div>
<div class="r" style="left:24px;top:1457px;width:12px;height:2px;background:#2a2a2a"></div>
<div class="r" style="left:0px;top:390px;width:4px;height:1088px;background:#9b9b9b"></div>
<div class="r" style="left:0px;top:390px;width:12px;height:4px;background:#9b9b9b"></div>
<div class="r" style="left:-6px;top:1489px;width:22px;height:22px;background:#fff;border-radius:5px;box-shadow:0 0 0 1.5px #2a2a2a"></div>
<div class="r" style="left:-1px;top:1499px;width:12px;height:2px;background:#2a2a2a"></div>
<div class="r" style="left:0px;top:1525px;width:4px;height:40px;background:#9b9b9b"></div>
<div class="r" style="left:0px;top:1525px;width:12px;height:4px;background:#9b9b9b"></div>
<div class="r" style="left:24px;top:1540px;width:4px;height:4px;background:#9b9b9b"></div>
<div class="r" style="left:-6px;top:1573px;width:22px;height:22px;background:#fff;border-radius:5px;box-shadow:0 0 0 1.5px #2a2a2a"></div>
<div class="r" style="left:-1px;top:1583px;width:12px;height:2px;background:#2a2a2a"></div>
<div class="r" style="left:770px;top:513px;width:630px;height:795px;background:#2d2c2b;border-radius:18px;box-shadow:0 0 0 1px #151515, 0 32px 90px 6px rgba(0,0,0,0.62);overflow:hidden"></div>
<div class="r" style="left:770px;top:513px;width:630px;height:57px;background:#3a3a3a;border-radius:18px 18px 0 0"></div>
<div class="r" style="left:770px;top:570px;width:630px;height:2px;background:#141414"></div>
<div class="t" style="left:935.0px;width:300px;text-align:center;top:527.5px;font-size:26px;line-height:26px;color:#cfcfcf;font-weight:normal;-webkit-text-stroke:0.3px #cfcfcf;">分类汇总</div>
<div class="t" style="left:810px;top:613.0px;font-size:26px;line-height:26px;color:#e3e3e3;font-weight:normal;letter-spacing:1px;-webkit-text-stroke:0.3px #e3e3e3;">分类字段:</div>
<div class="r" style="left:810px;top:658px;width:550px;height:40px;background:#646464;border-radius:8px;box-shadow:inset 0 1px 0 rgba(255,255,255,0.16), 0 1px 1px rgba(0,0,0,0.3)"></div>
<div class="r" style="left:1324px;top:662px;width:32px;height:32px;background:linear-gradient(#3c7e4c,#34704a);border-radius:7px;box-shadow:0 0 2px rgba(0,0,0,0.45), inset 0 1px 0 rgba(255,255,255,0.15)"></div>
<svg class="r" style="left:1323.5px;top:662px" width="33" height="32" viewBox="0 0 33 32"><path d="M11 12 L16.5 6.5 L22 12 M11 20 L16.5 25.5 L22 20" stroke="#e8f0ea" stroke-width="3" fill="none" stroke-linecap="round"/></svg>
<div class="t" style="left:826px;top:664.3px;font-size:25px;line-height:25px;color:#ececec;font-weight:normal;-webkit-text-stroke:0.3px #ececec;">表<span style="margin-left:3px">1</span></div>
<div class="t" style="left:810px;top:717.0px;font-size:26px;line-height:26px;color:#e3e3e3;font-weight:normal;letter-spacing:1px;-webkit-text-stroke:0.3px #e3e3e3;">汇总方式:</div>
<div class="r" style="left:810px;top:762px;width:550px;height:40px;background:#646464;border-radius:8px;box-shadow:inset 0 1px 0 rgba(255,255,255,0.16), 0 1px 1px rgba(0,0,0,0.3)"></div>
<div class="r" style="left:1324px;top:766px;width:32px;height:32px;background:linear-gradient(#3c7e4c,#34704a);border-radius:7px;box-shadow:0 0 2px rgba(0,0,0,0.45), inset 0 1px 0 rgba(255,255,255,0.15)"></div>
<svg class="r" style="left:1323.5px;top:766px" width="33" height="32" viewBox="0 0 33 32"><path d="M11 12 L16.5 6.5 L22 12 M11 20 L16.5 25.5 L22 20" stroke="#e8f0ea" stroke-width="3" fill="none" stroke-linecap="round"/></svg>
<div class="t" style="left:826px;top:767.8px;font-size:25px;line-height:25px;color:#ececec;font-weight:normal;-webkit-text-stroke:0.3px #ececec;">求和</div>
<div class="t" style="left:810px;top:822.0px;font-size:26px;line-height:26px;color:#e3e3e3;font-weight:normal;letter-spacing:1px;-webkit-text-stroke:0.3px #e3e3e3;">选定汇总项:</div>
<div class="r" style="left:804px;top:860px;width:562px;height:194px;background:#4a7a50;border-radius:9px"></div>
<div class="r" style="left:811px;top:867px;width:548px;height:180px;background:#262626;box-shadow:inset 0 0 0 1px #1a1a1a"></div>
<div class="r" style="left:812px;top:906px;width:546px;height:38px;background:#29612a"></div>
<div class="r" style="left:828px;top:872px;width:28px;height:28px;background:linear-gradient(#474747,#5c5c5c);border-radius:6px;box-shadow:0 1px 1px rgba(0,0,0,0.35)"></div>
<div class="r" style="left:828px;top:911px;width:28px;height:28px;background:linear-gradient(#4f7f4f,#6a9a6a);border-radius:6px;box-shadow:0 1px 1px rgba(0,0,0,0.35)"></div>
<div class="r" style="left:828px;top:949px;width:28px;height:28px;background:linear-gradient(#3a7a4e,#2c6a40);border-radius:6px;box-shadow:0 1px 1px rgba(0,0,0,0.35)"></div>
<svg class="r" style="left:828px;top:949px" width="28" height="28" viewBox="0 0 28 28"><path d="M7 14.5 L12 20 L21 8" stroke="#f0f0f0" stroke-width="3.5" fill="none" stroke-linecap="round" stroke-linejoin="round"/></svg>
<div class="t" style="left:870px;top:874.8px;font-size:25px;line-height:25px;color:#e6e6e6;font-weight:normal;-webkit-text-stroke:0.3px #e6e6e6;">表<span style="margin-left:3px">1</span></div>
<div class="t" style="left:870px;top:912.8px;font-size:25px;line-height:25px;color:#f2f2f2;font-weight:normal;-webkit-text-stroke:0.3px #f2f2f2;">表<span style="margin-left:3px">2</span></div>
<div class="t" style="left:870px;top:950.8px;font-size:25px;line-height:25px;color:#e6e6e6;font-weight:normal;-webkit-text-stroke:0.3px #e6e6e6;">表<span style="margin-left:3px">2</span></div>
<div class="r" style="left:810px;top:1070px;width:28px;height:28px;background:linear-gradient(#3a7a4e,#2c6a40);border-radius:6px;box-shadow:0 1px 1px rgba(0,0,0,0.35)"></div>
<svg class="r" style="left:810px;top:1070px" width="28" height="28" viewBox="0 0 28 28"><path d="M7 14.5 L12 20 L21 8" stroke="#f0f0f0" stroke-width="3.5" fill="none" stroke-linecap="round" stroke-linejoin="round"/></svg>
<div class="r" style="left:810px;top:1114px;width:28px;height:28px;background:linear-gradient(#474747,#5c5c5c);border-radius:6px;box-shadow:0 1px 1px rgba(0,0,0,0.35)"></div>
<div class="r" style="left:810px;top:1158px;width:28px;height:28px;background:linear-gradient(#474747,#5c5c5c);border-radius:6px;box-shadow:0 1px 1px rgba(0,0,0,0.35)"></div>
<div class="t" style="left:850px;top:1072.0px;font-size:26px;line-height:26px;color:#e3e3e3;font-weight:normal;letter-spacing:0.45px;-webkit-text-stroke:0.3px #e3e3e3;">替换当前分类汇总</div>
<div class="t" style="left:850px;top:1116.0px;font-size:26px;line-height:26px;color:#e3e3e3;font-weight:normal;letter-spacing:0.45px;-webkit-text-stroke:0.3px #e3e3e3;">每组数据分页</div>
<div class="t" style="left:850px;top:1160.0px;font-size:26px;line-height:26px;color:#e3e3e3;font-weight:normal;letter-spacing:0.45px;-webkit-text-stroke:0.3px #e3e3e3;">汇总结果显示在数据下方</div>
<div class="r" style="left:810px;top:1228px;width:148px;height:40px;background:#646464;border-radius:8px;box-shadow:inset 0 1px 0 rgba(255,255,255,0.14), 0 1px 1px rgba(0,0,0,0.3)"></div>
<div class="t" style="left:810.0px;width:148px;text-align:center;top:1234.3px;font-size:25px;line-height:25px;color:#ececec;font-weight:normal;letter-spacing:1px;-webkit-text-stroke:0.3px #ececec;">全部删除</div>
<div class="r" style="left:1008px;top:1230px;width:188px;height:40px;background:#646464;border-radius:8px;box-shadow:inset 0 1px 0 rgba(255,255,255,0.14), 0 1px 1px rgba(0,0,0,0.3)"></div>
<div class="t" style="left:1008.0px;width:188px;text-align:center;top:1236.3px;font-size:25px;line-height:25px;color:#ececec;font-weight:normal;letter-spacing:1px;-webkit-text-stroke:0.3px #ececec;">取消</div>
<div class="r" style="left:1220px;top:1230px;width:140px;height:40px;background:linear-gradient(#3b7f4d,#326e44);border-radius:8px;box-shadow:inset 0 1px 0 rgba(255,255,255,0.14), 0 1px 1px rgba(0,0,0,0.3)"></div>
<div class="t" style="left:1220.0px;width:140px;text-align:center;top:1236.3px;font-size:25px;line-height:25px;color:#f2f2f2;font-weight:normal;letter-spacing:1px;-webkit-text-stroke:0.3px #f2f2f2;">确定</div>
<div class="r" style="left:770px;top:513px;width:630px;height:795px;border-radius:18px;box-shadow:inset 0 0 0 1px rgba(255,255,255,0.2);box-sizing:border-box"></div>
<svg class="r" style="left:0px;top:0px" width="1502" height="1588" viewBox="0 0 1502 1588">
<path d="M600 963 H756 V943 L805 968 L756 993 V973 H600 Z" fill="#6ef8fe"/>
<path d="M600 1167 H756 V1147 L805 1172 L756 1197 V1177 H600 Z" fill="#6ef8fe"/>
<path d="M886.4 1514.5 L895.7 1514.5 L890.5 1325 L910 1324 L884 1275.5 L860.6 1325.7 L881.2 1325.5 Z" fill="#ec451d"/>
</svg>
</div></body></html>
